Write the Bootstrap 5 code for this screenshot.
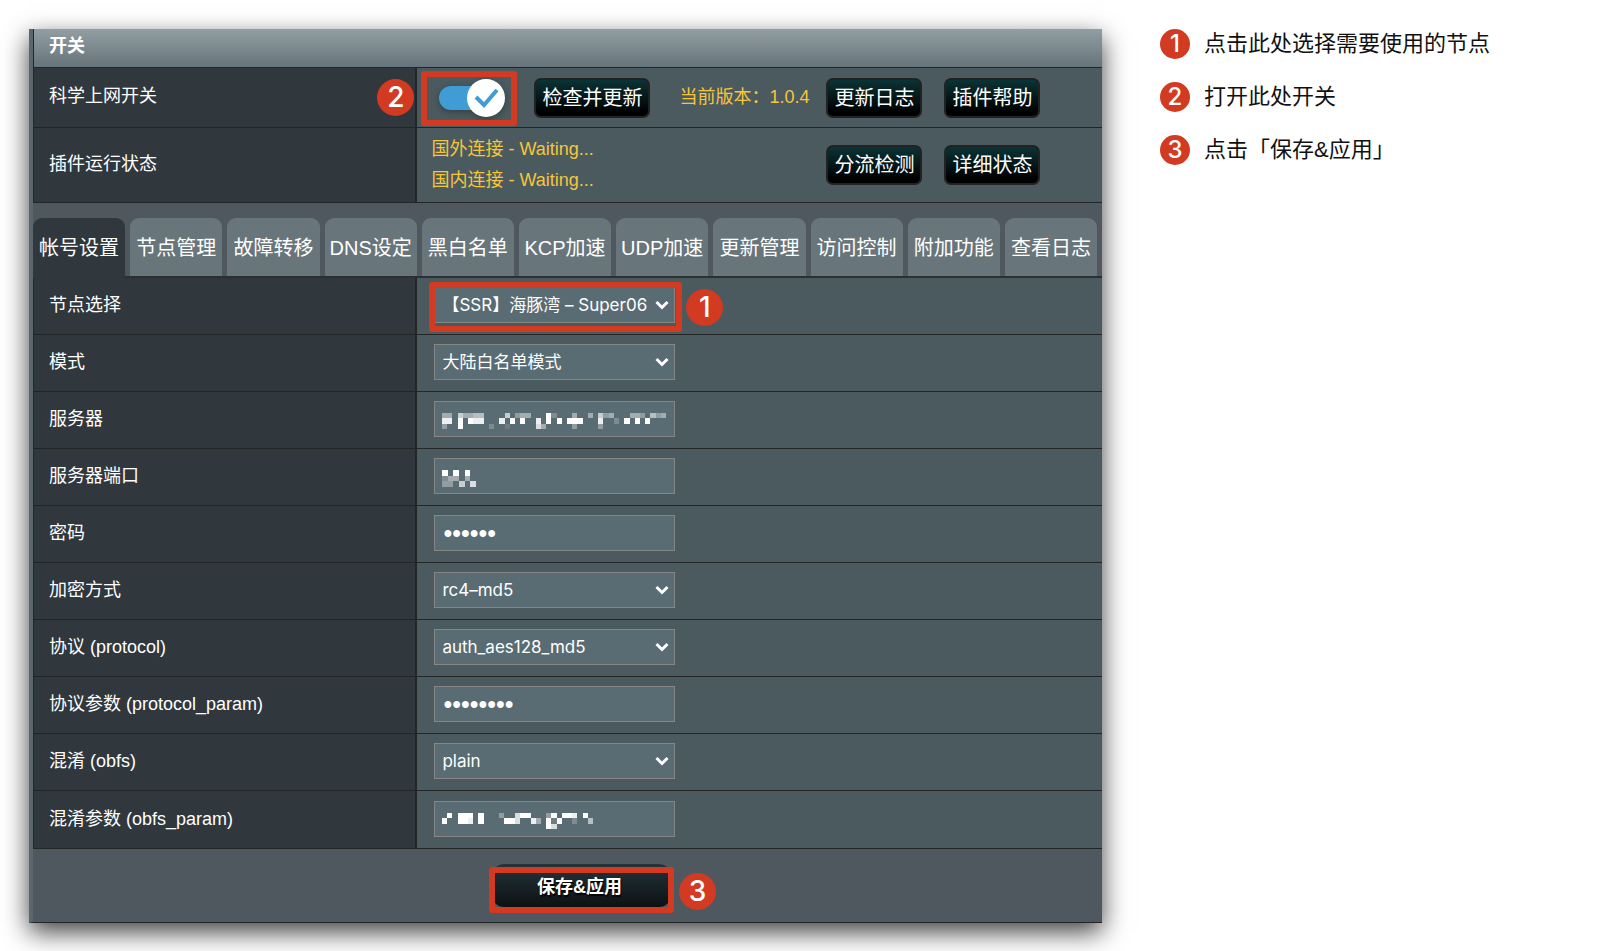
<!DOCTYPE html>
<html lang="zh-CN">
<head>
<meta charset="utf-8">
<meta name="viewport" content="width=device-width, initial-scale=1">
<title>科学上网</title>
<link href="https://cdn.jsdelivr.net/npm/bootstrap@5.3.0/dist/css/bootstrap.min.css" rel="stylesheet">
<style>
  :root { --mark: #d23a22; --rule: #232627; --accent: #f5c63c; }
  body { font-family: "Liberation Sans", "Noto Sans CJK SC", sans-serif; background: #fff; color: #111; }
  .page-grid { display: grid; grid-template-columns: minmax(0, 1fr) 411px; gap: 58px; align-items: start; padding: 29px 29px 28px; }

  .panel { background: #50585f; border-left: 4px solid #5a686d; border-bottom: 1px solid var(--rule); box-shadow: 0 9px 24px rgba(0,0,0,.75); color: #fff; }
  .panel-title { height: 39px; padding: 2px 0 0 15px; font-size: 18px; line-height: 30px; font-weight: 700; background: linear-gradient(#929ea2, #66747b); border-bottom: 1px solid var(--rule); border-left: 1px solid var(--rule); margin: 0; }
  .form-grid { width: 100%; table-layout: fixed; border-collapse: separate; border-spacing: 0; border-left: 1px solid var(--rule); }
  .form-grid th { width: 35.9%; background: #30383e; border-right: 2px solid var(--rule); border-bottom: 1px solid var(--rule); padding: 0 0 3px 15px; font-size: 18px; line-height: 24px; font-weight: 400; vertical-align: middle; position: relative; }
  .form-grid td { background: #4b5a5f; border-bottom: 1px solid var(--rule); padding: 0 14px; vertical-align: middle; }
  .row-switch > * { height: 60px; }
  .row-status > * { height: 75px; }
  .settings tr > * { height: 57px; }
  .settings tr:last-child > * { height: 58px; }
  .settings th { padding-bottom: 2px; }
  .settings td { padding: 0 17px 2px; }

  .left-zone { width: 395px; flex: none; gap: 29px; }
  .note { color: var(--accent); font-size: 18px; line-height: 31px; }
  .btn-dark-glass { --bs-btn-color: #fff; --bs-btn-hover-color: #fff; height: 40px; min-width: 95px; padding: 0 6px; font-size: 20px; line-height: 34px; color: #fff; background: linear-gradient(#0b3335, #000 90%); border: 2px solid #222; border-radius: 7px; white-space: nowrap; }
  .gap-buttons { gap: 22px; }
  .switch { appearance: none; width: 66px; height: 38px; border: 0; margin: 0; display: block; background: url("data:image/svg+xml,%3Csvg xmlns='http://www.w3.org/2000/svg' viewBox='0 0 66 38'%3E%3Crect y='7' width='58' height='24' rx='12' fill='%23409cd5'/%3E%3Ccircle cx='47' cy='19' r='19' fill='white'/%3E%3Cpath d='M37 18l8 8 13-15' fill='none' stroke='%23409cd5' stroke-width='4'/%3E%3C/svg%3E") no-repeat; filter: drop-shadow(0 2px 3px rgba(0,0,0,.3)); }

  .tabs-bar { gap: 5px; padding: 15px 5px 0 0; border-bottom: 2px solid #2a2f32; }
  .tabs-bar .nav-item { flex: 1 1 0; }
  .tabs-bar .nav-link { height: 58px; padding: 0; line-height: 60px; font-size: 20px; color: #fff; background: #68757b; border: 0; border-radius: 9px 9px 0 0; text-align: center; white-space: nowrap; width: 100%; }
  .tabs-bar .nav-link.active { background: #30383e; color: #fff; margin-bottom: -2px; height: 60px; }

  .field { position: relative; width: 241px; }
  .field .form-control, .field .form-select { height: 36px; padding: 0 7px; font-family: Inter, "Noto Sans CJK SC", sans-serif; font-size: 17px; line-height: 34px; color: #fff; background-color: #5a6c73; border: 1px solid #868686; border-radius: 0; }
  .field .form-control[type="password"] { font-family: "Liberation Sans", sans-serif; font-size: 25px; padding-left: 8px; }
  .field .form-select { padding-right: 24px; background-image: url("data:image/svg+xml,%3Csvg xmlns='http://www.w3.org/2000/svg' viewBox='0 0 14 10'%3E%3Cpath d='M1.5 2L7 7.500l5.500-5.500' fill='none' stroke='white' stroke-width='3'/%3E%3C/svg%3E"); background-size: 14px 10px; background-position: right 5px center; text-overflow: clip; }
  .mosaic { position: absolute; left: 8px; top: 12px; fill: #fff; pointer-events: none; }

  .num { display: inline-flex; align-items: center; justify-content: center; flex: none; border-radius: 50%; background: var(--mark); color: #fff; font-family: Inter, sans-serif; width: 37px; height: 37px; font-size: 28px; line-height: 37px; font-weight: 500; }
  .num-list { width: 30px; height: 30px; font-size: 24px; line-height: 30px; }
  .frame { position: absolute; border: 6px solid var(--mark); border-radius: 3px; pointer-events: none; }
  .frame-select { inset: -5px -7px -9px -5px; }
  .frame-switch { inset: -8px -12px -9px -18px; }
  .frame-save { inset: 3px -3px -6px -3px; }
  .num-side { position: absolute; left: calc(100% + 11px); top: 2px; }
  .num-save { left: calc(100% + 8px); top: 9px; }
  .num-switch { position: absolute; right: 1px; top: 11px; }

  .save-row { height: 73px; padding: 15px 0 0 28px; }
  .save-btn { width: 179px; height: 43px; padding: 4px 4px 0 0; font-size: 18px; font-weight: 700; line-height: 39px; color: #fff; background: linear-gradient(#24343a, #0d1113); border: 0; border-radius: 12px; text-shadow: 1px 2px 1px #000; }
  .save-btn:hover, .btn-dark-glass:hover { color: #fff; }

  .steps { font-size: 22px; line-height: 30px; gap: 23px; list-style: none; margin: 0; padding: 0; }
  .steps li { gap: 14px; display: flex; white-space: nowrap; }
</style>
</head>
<body>
<div class="page-grid">
  <main class="panel">
    <h1 class="panel-title">开关</h1>
    <table class="form-grid">
      <tr class="row-switch">
        <th scope="row"><label for="ss">科学上网开关</label><span class="num num-switch">2</span></th>
        <td>
          <div class="d-flex align-items-center">
            <div class="left-zone d-flex align-items-center">
              <div class="position-relative ms-2">
                <input class="switch" type="checkbox" role="switch" id="ss" checked>
                <span class="frame frame-switch"></span>
              </div>
              <button type="button" class="btn btn-dark-glass">检查并更新</button>
              <span class="note text-nowrap">当前版本：1.0.4</span>
            </div>
            <div class="d-flex gap-buttons">
              <button type="button" class="btn btn-dark-glass">更新日志</button>
              <button type="button" class="btn btn-dark-glass">插件帮助</button>
            </div>
          </div>
        </td>
      </tr>
      <tr class="row-status">
        <th scope="row">插件运行状态</th>
        <td>
          <div class="d-flex align-items-center">
            <div class="left-zone note">国外连接 - Waiting...<br>国内连接 - Waiting...</div>
            <div class="d-flex gap-buttons">
              <button type="button" class="btn btn-dark-glass">分流检测</button>
              <button type="button" class="btn btn-dark-glass">详细状态</button>
            </div>
          </div>
        </td>
      </tr>
    </table>

    <ul class="nav tabs-bar flex-nowrap">
      <li class="nav-item"><button type="button" class="nav-link active">帐号设置</button></li>
      <li class="nav-item"><button type="button" class="nav-link">节点管理</button></li>
      <li class="nav-item"><button type="button" class="nav-link">故障转移</button></li>
      <li class="nav-item"><button type="button" class="nav-link">DNS设定</button></li>
      <li class="nav-item"><button type="button" class="nav-link">黑白名单</button></li>
      <li class="nav-item"><button type="button" class="nav-link">KCP加速</button></li>
      <li class="nav-item"><button type="button" class="nav-link">UDP加速</button></li>
      <li class="nav-item"><button type="button" class="nav-link">更新管理</button></li>
      <li class="nav-item"><button type="button" class="nav-link">访问控制</button></li>
      <li class="nav-item"><button type="button" class="nav-link">附加功能</button></li>
      <li class="nav-item"><button type="button" class="nav-link">查看日志</button></li>
    </ul>

    <table class="form-grid settings">
      <tr>
        <th scope="row"><label for="node">节点选择</label></th>
        <td><div class="field"><select class="form-select" id="node"><option>【SSR】海豚湾 – Super06</option></select><span class="frame frame-select"></span><span class="num num-side">1</span></div></td>
      </tr>
      <tr>
        <th scope="row"><label for="mode">模式</label></th>
        <td><div class="field"><select class="form-select" id="mode"><option>大陆白名单模式</option></select></div></td>
      </tr>
      <tr>
        <th scope="row"><label for="server">服务器</label></th>
        <td><div class="field"><input class="form-control" type="text" id="server"><svg class="mosaic" data-cell="5.2" data-rows="4406445500006034400092000400406340004430534 8809098800080909008090909990008002090909000 3009000002001000007400000300003000000000000"></svg></div></td>
      </tr>
      <tr>
        <th scope="row"><label for="port">服务器端口</label></th>
        <td><div class="field"><input class="form-control" type="text" id="port"><svg class="mosaic" data-cell="5.6" data-rows="909090 244040 330607"></svg></div></td>
      </tr>
      <tr>
        <th scope="row"><label for="pass">密码</label></th>
        <td><div class="field"><input class="form-control" type="password" id="pass" value="abcdef"></div></td>
      </tr>
      <tr>
        <th scope="row"><label for="method">加密方式</label></th>
        <td><div class="field"><select class="form-select" id="method"><option>rc4–md5</option></select></div></td>
      </tr>
      <tr>
        <th scope="row"><label for="proto">协议 (protocol)</label></th>
        <td><div class="field"><select class="form-select" id="proto"><option>auth_aes128_md5</option></select></div></td>
      </tr>
      <tr>
        <th scope="row"><label for="pparam">协议参数 (protocol_param)</label></th>
        <td><div class="field"><input class="form-control" type="password" id="pparam" value="abcdefgh"></div></td>
      </tr>
      <tr>
        <th scope="row"><label for="obfs">混淆 (obfs)</label></th>
        <td><div class="field"><select class="form-select" id="obfs"><option>plain</option></select></div></td>
      </tr>
      <tr>
        <th scope="row"><label for="oparam">混淆参数 (obfs_param)</label></th>
        <td><div class="field"><input class="form-control" type="text" id="oparam"><svg class="mosaic" data-cell="5.2" data-rows="09099909000300799000390998090 90099809000099700840919002005 00000000000000000000970000000"></svg></div></td>
      </tr>
    </table>

    <div class="save-row d-flex justify-content-center align-items-start">
      <div class="position-relative d-flex">
        <button type="button" class="btn save-btn">保存&amp;应用</button>
        <span class="frame frame-save"></span>
        <span class="num num-side num-save">3</span>
      </div>
    </div>
  </main>

  <ol class="steps d-flex flex-column">
    <li><span class="num num-list">1</span>点击此处选择需要使用的节点</li>
    <li><span class="num num-list">2</span>打开此处开关</li>
    <li><span class="num num-list">3</span>点击「保存&amp;应用」</li>
  </ol>
</div>
<script src="https://cdn.jsdelivr.net/npm/bootstrap@5.3.0/dist/js/bootstrap.bundle.min.js"></script>
<script>
  // Masked values: each digit is the brightness (0-9) of one square.
  document.querySelectorAll('.mosaic').forEach(function (svg) {
    var rows = svg.dataset.rows.split(' '), cell = +svg.dataset.cell, cols = rows[0].length;
    svg.setAttribute('viewBox', '0 0 ' + cols + ' ' + rows.length);
    svg.setAttribute('width', Math.round(cols * cell));
    svg.setAttribute('height', Math.round(rows.length * cell));
    svg.setAttribute('shape-rendering', 'crispEdges');
    rows.forEach(function (row, y) {
      row.split('').forEach(function (v, x) {
        if (v === '0') return;
        var r = document.createElementNS('http://www.w3.org/2000/svg', 'rect');
        r.setAttribute('x', x); r.setAttribute('y', y);
        r.setAttribute('width', 1); r.setAttribute('height', 1);
        r.setAttribute('fill-opacity', v / 9);
        svg.appendChild(r);
      });
    });
  });
</script>
</body>
</html>
